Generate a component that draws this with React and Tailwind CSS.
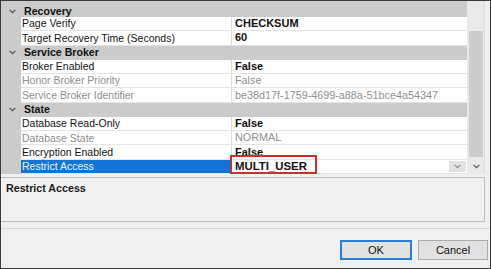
import React from "react";

const categories = [
  {
    name: "Recovery",
    props: [
      { label: "Page Verify", value: "CHECKSUM" },
      { label: "Target Recovery Time (Seconds)", value: "60" },
    ],
  },
  {
    name: "Service Broker",
    props: [
      { label: "Broker Enabled", value: "False" },
      { label: "Honor Broker Priority", value: "False", disabled: true },
      {
        label: "Service Broker Identifier",
        value: "be38d17f-1759-4699-a88a-51bce4a54347",
        disabled: true,
      },
    ],
  },
  {
    name: "State",
    props: [
      { label: "Database Read-Only", value: "False" },
      { label: "Database State", value: "NORMAL", disabled: true },
      { label: "Encryption Enabled", value: "False" },
      { label: "Restrict Access", value: "MULTI_USER", selected: true },
    ],
  },
];

function Chevron({ color = "#4a4a4a" }) {
  return (
    <svg width="7" height="5" viewBox="0 0 7 5">
      <path d="M0.6 0.8 L3.5 3.7 L6.4 0.8" stroke={color} strokeWidth="1.2" fill="none" />
    </svg>
  );
}

function CategoryRow({ name, first }) {
  return (
    <div
      className={`flex items-center ${first ? "h-[16px] pt-[4px]" : "h-[14.27px]"}`}
    >
      <div className="w-[20px] flex justify-center pl-[2px]">
        <Chevron />
      </div>
      <div className="pl-[3px] text-[10.6px] font-bold text-[#111] leading-none">{name}</div>
    </div>
  );
}

function PropRow({ label, value, disabled, selected }) {
  return (
    <div className="flex h-[14.27px]">
      <div className="w-[20px]" />
      <div className="flex-1 flex bg-white border-b border-[#e4e4e4]">
        <div
          className={`w-[211px] flex items-center pl-[1px] border-r border-[#dadada] text-[10.5px] leading-none ${
            selected ? "bg-[#1474d4] text-[#eef5fc]" : disabled ? "text-[#8f8f8f]" : "text-[#141414]"
          }`}
        >
          {label}
        </div>
        <div
          className={`relative flex-1 flex items-center pl-[3px] leading-none ${
            disabled ? "text-[10.8px] text-[#8f8f8f]" : "text-[11px] font-bold text-[#111]"
          }`}
        >
          {selected ? (
            <>
              <span className="text-[11.4px]">{value}</span>
              <div className="absolute left-[-2px] top-[-5px] w-[87px] h-[19px] border-2 border-[#c9302c] z-10" />
              <div className="ml-auto mr-[1px] w-[17px] h-[11px] bg-[#e2e2e2] flex items-center justify-center">
                <Chevron color="#8a8a8a" />
              </div>
            </>
          ) : (
            value
          )}
        </div>
      </div>
    </div>
  );
}

export default function App() {
  return (
    <div className="w-[491px] h-[269px] overflow-hidden bg-[#f0f0f0] border border-[#3a3a3a] flex flex-col font-['Liberation_Sans',Arial,sans-serif]">
      {/* property grid */}
      <div className="flex h-[173px] shrink-0">
        <div className="w-[466px] bg-[#cbcbcb] flex flex-col">
          {categories.map((cat, ci) => (
            <React.Fragment key={cat.name}>
              <CategoryRow name={cat.name} first={ci === 0} />
              {cat.props.map((p) => (
                <PropRow key={p.label} {...p} />
              ))}
            </React.Fragment>
          ))}
        </div>
        {/* scrollbar */}
        <div className="w-[17px] flex flex-col bg-[#e9e9e9] pl-[1px]">
          <div className="h-[30px]" />
          <div className="h-[126px] bg-[#cdcdcd] mx-[1px]" />
          <div className="flex-1 flex items-center justify-center pt-[2px]">
            <Chevron color="#555" />
          </div>
        </div>
        <div className="flex-1 border-l border-[#dcdcdc]" />
      </div>

      {/* description panel */}
      <div className="mt-[3px] w-[484px] h-[45px] border-t border-r border-b border-[#bdbdbd] px-[5px] pt-[3px]">
        <div className="text-[10.7px] font-bold text-[#1a1a1a] leading-[14px]">Restrict Access</div>
      </div>

      {/* buttons */}
      <div className="mt-[6px] flex-1 border-t border-[#d6d6d6] flex justify-end items-start gap-[6px] pr-[2px] pt-[11px]">
        <button className="w-[72px] h-[20px] bg-[#e1e1e1] border-2 border-[#2a7fd4] text-[11px] text-[#111] leading-none">
          OK
        </button>
        <button className="w-[70px] h-[20px] bg-[#e1e1e1] border border-[#adadad] text-[11px] text-[#111] leading-none">
          Cancel
        </button>
      </div>
    </div>
  );
}
